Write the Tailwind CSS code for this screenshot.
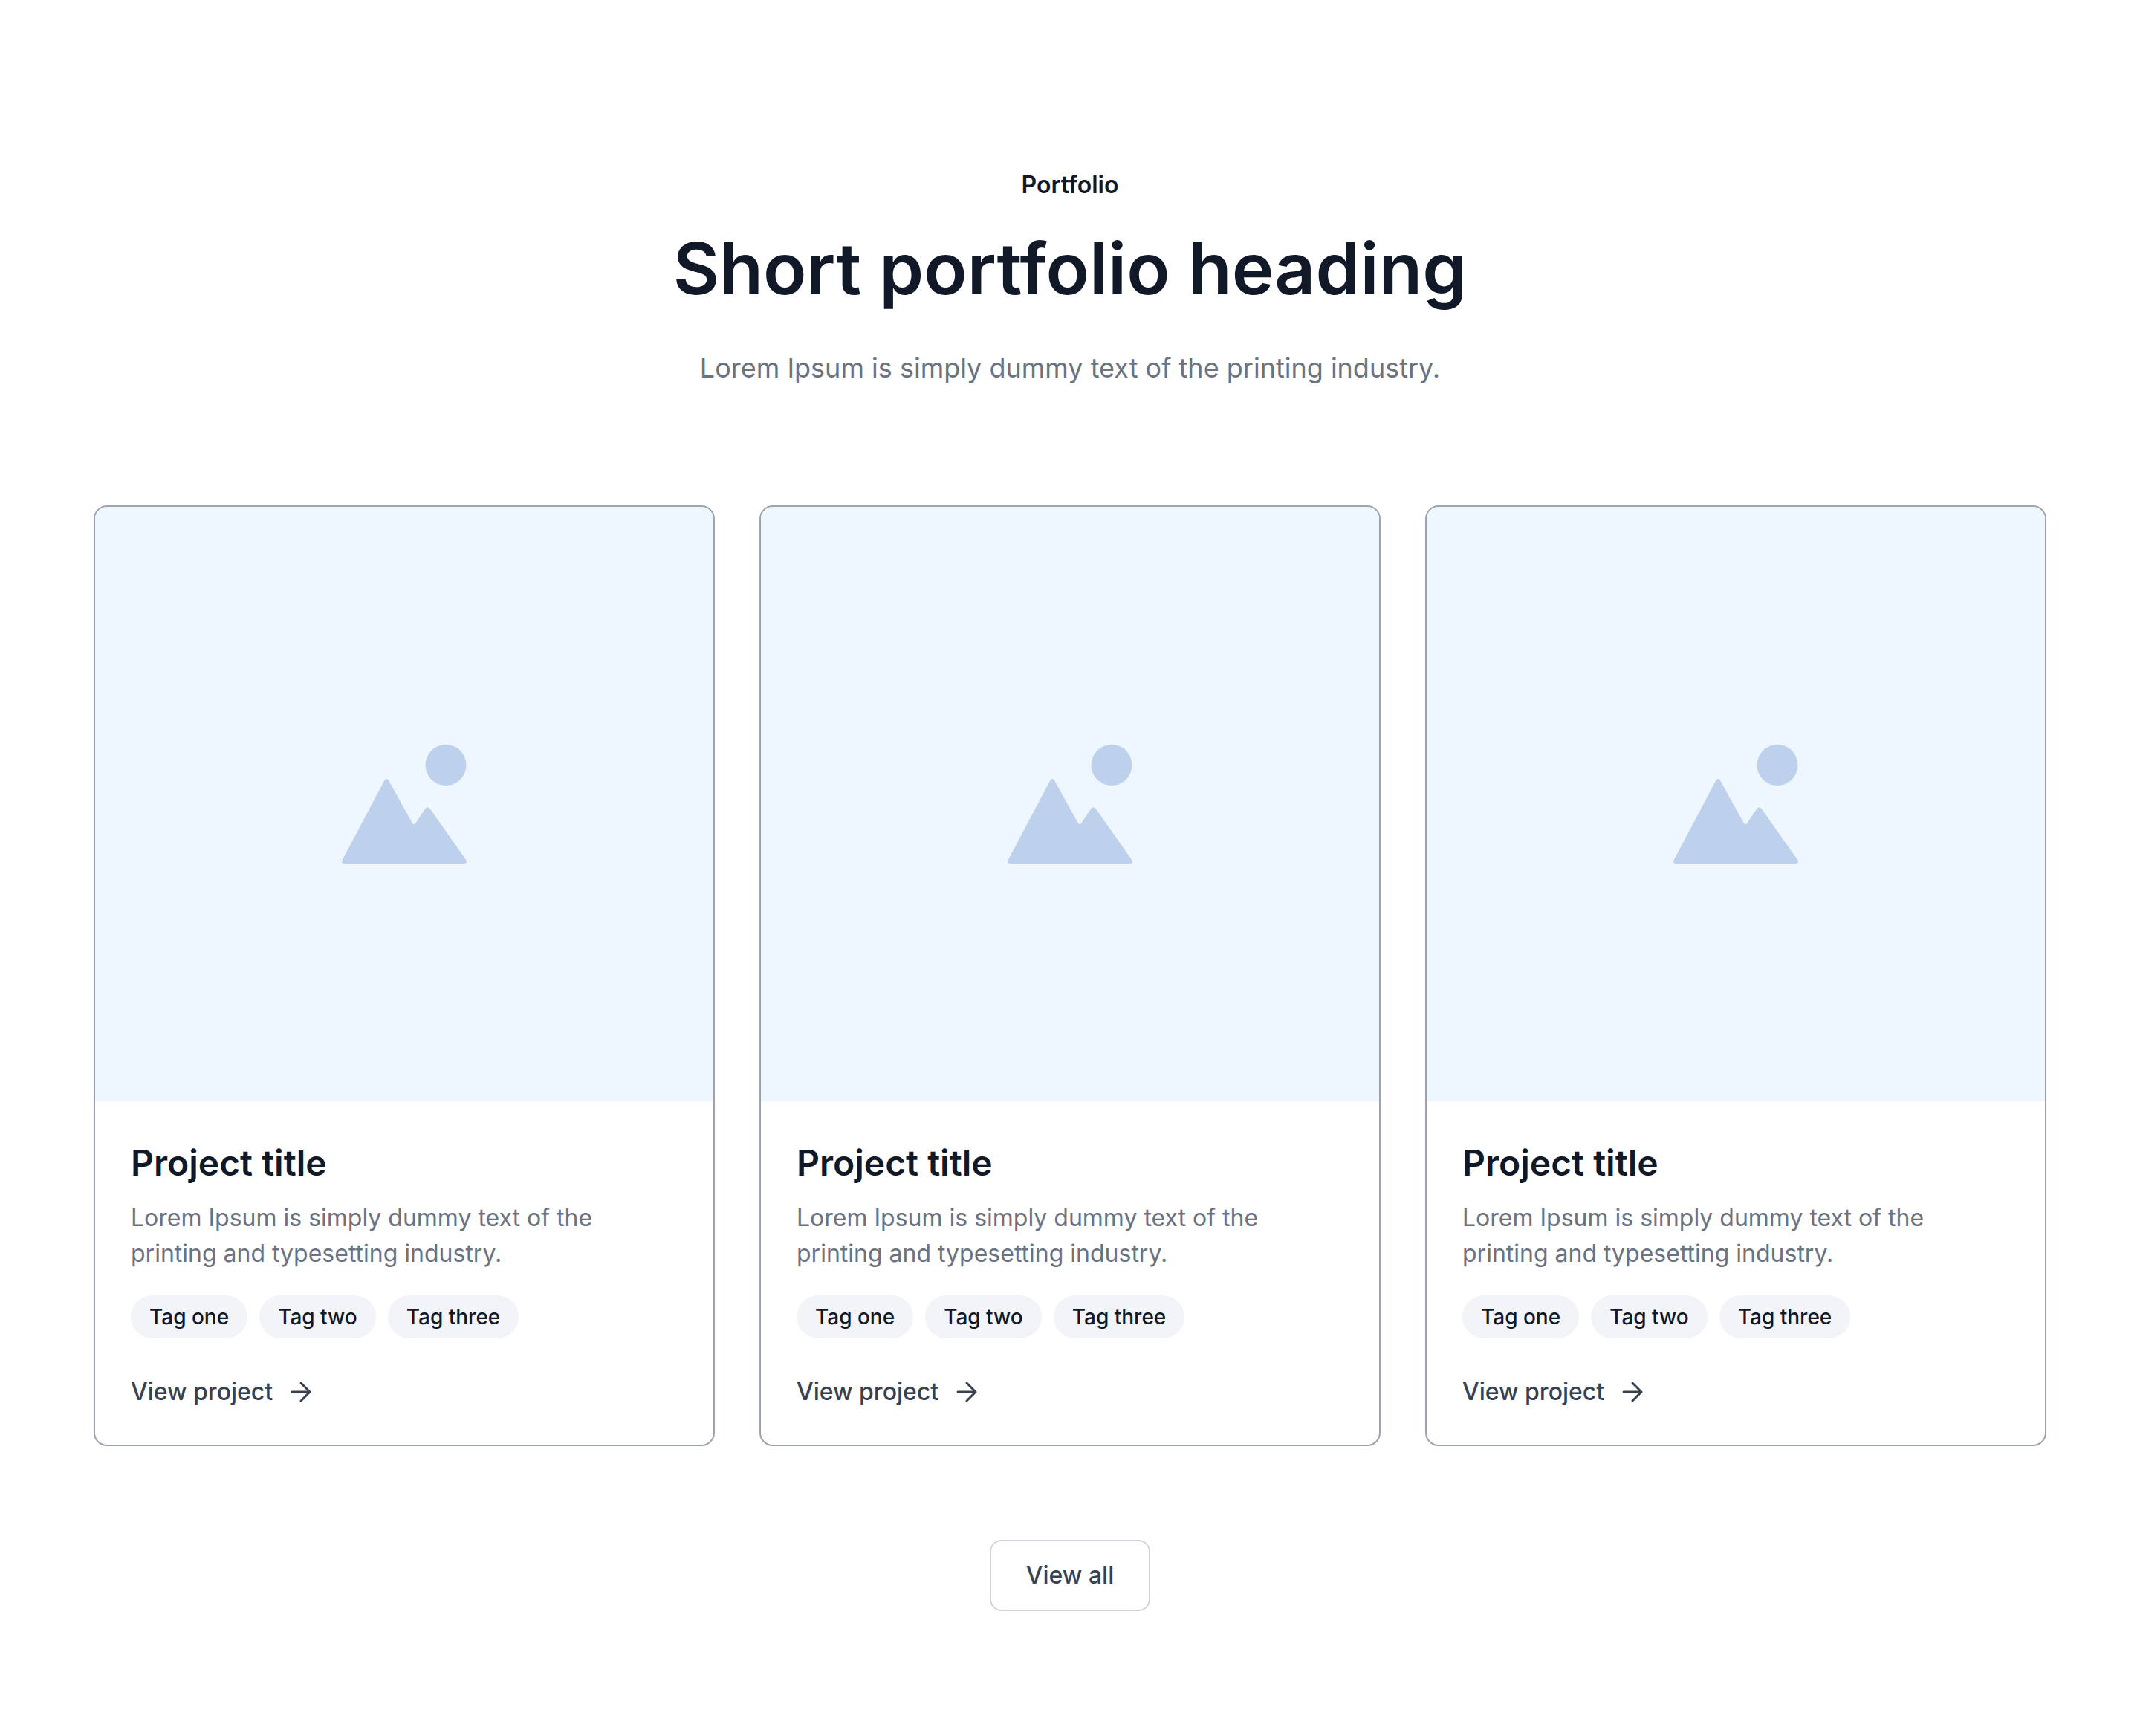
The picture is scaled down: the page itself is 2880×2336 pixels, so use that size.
<!DOCTYPE html>
<html lang="en">
<head>
    <meta charset="UTF-8">
    <meta name="viewport" content="width=device-width, initial-scale=1.0">
    <title>Portfolio</title>
    <script src="https://cdn.jsdelivr.net/npm/@tailwindcss/browser@4"></script>
</head>
<body class="bg-white font-['Inter',sans-serif] text-[#111827]">

    <!-- Shared icons -->
    <svg class="hidden">
        <symbol id="icon-image" viewBox="0 0 168 160">
            <circle cx="140" cy="27.5" r="27.5" fill="currentColor"/>
            <path d="M57.4 48 Q60 44 63 48 L94.500 105 Q96.800 109 99 106 L112.500 86 Q115.500 82.500 118.500 86 L167.500 155.500 Q169 160 165 160 H3 Q-1 160 0.500 155.500 Z" fill="currentColor"/>
        </symbol>
        <symbol id="icon-arrow" viewBox="0 0 40 40">
            <path d="M6 20 H30 M18 8 L30 20 L18 32" fill="none" stroke="currentColor" stroke-width="3" stroke-linecap="round" stroke-linejoin="round"/>
        </symbol>
    </svg>

    <section class="flex flex-col items-center px-[126px] pt-[225px] pb-[168px]">
        <header class="text-center">
            <p class="text-[32px] leading-12 font-semibold">Portfolio</p>
            <h1 class="mt-7 text-8xl leading-[120px] font-semibold">Short portfolio heading</h1>
            <p class="mt-[46px] text-4xl leading-14 text-[#6b7280]">Lorem Ipsum is simply dummy text of the printing industry.</p>
        </header>

        <div class="mt-[157px] grid w-full grid-cols-3 gap-15">
            <article class="overflow-hidden rounded-[18px] border-2 border-[#9ca3af]">
                <div class="flex h-[800px] items-center justify-center bg-[#eef6ff] text-[#bdd1ec]">
                    <svg class="h-40 w-42"><use href="#icon-image"/></svg>
                </div>
                <div class="px-12 pt-[49px] pb-[47px]">
                    <h2 class="text-5xl leading-17 font-semibold">Project title</h2>
                    <p class="mt-4 max-w-[680px] text-[32px] leading-12 text-[#6b7280]">Lorem Ipsum is simply dummy text of the printing and typesetting industry.</p>
                    <ul class="mt-8 flex gap-4 text-[28px] leading-[42px] font-medium">
                        <li class="rounded-full bg-[#f3f4f8] px-[25px] py-2">Tag one</li>
                        <li class="rounded-full bg-[#f3f4f8] px-[25px] py-2">Tag two</li>
                        <li class="rounded-full bg-[#f3f4f8] px-[25px] py-2">Tag three</li>
                    </ul>
                    <a href="#" class="mt-12 flex w-fit items-center gap-5 text-[32px] leading-12 font-medium text-[#374151]">
                        View project
                        <svg class="size-10"><use href="#icon-arrow"/></svg>
                    </a>
                </div>
            </article>

            <article class="overflow-hidden rounded-[18px] border-2 border-[#9ca3af]">
                <div class="flex h-[800px] items-center justify-center bg-[#eef6ff] text-[#bdd1ec]">
                    <svg class="h-40 w-42"><use href="#icon-image"/></svg>
                </div>
                <div class="px-12 pt-[49px] pb-[47px]">
                    <h2 class="text-5xl leading-17 font-semibold">Project title</h2>
                    <p class="mt-4 max-w-[680px] text-[32px] leading-12 text-[#6b7280]">Lorem Ipsum is simply dummy text of the printing and typesetting industry.</p>
                    <ul class="mt-8 flex gap-4 text-[28px] leading-[42px] font-medium">
                        <li class="rounded-full bg-[#f3f4f8] px-[25px] py-2">Tag one</li>
                        <li class="rounded-full bg-[#f3f4f8] px-[25px] py-2">Tag two</li>
                        <li class="rounded-full bg-[#f3f4f8] px-[25px] py-2">Tag three</li>
                    </ul>
                    <a href="#" class="mt-12 flex w-fit items-center gap-5 text-[32px] leading-12 font-medium text-[#374151]">
                        View project
                        <svg class="size-10"><use href="#icon-arrow"/></svg>
                    </a>
                </div>
            </article>

            <article class="overflow-hidden rounded-[18px] border-2 border-[#9ca3af]">
                <div class="flex h-[800px] items-center justify-center bg-[#eef6ff] text-[#bdd1ec]">
                    <svg class="h-40 w-42"><use href="#icon-image"/></svg>
                </div>
                <div class="px-12 pt-[49px] pb-[47px]">
                    <h2 class="text-5xl leading-17 font-semibold">Project title</h2>
                    <p class="mt-4 max-w-[680px] text-[32px] leading-12 text-[#6b7280]">Lorem Ipsum is simply dummy text of the printing and typesetting industry.</p>
                    <ul class="mt-8 flex gap-4 text-[28px] leading-[42px] font-medium">
                        <li class="rounded-full bg-[#f3f4f8] px-[25px] py-2">Tag one</li>
                        <li class="rounded-full bg-[#f3f4f8] px-[25px] py-2">Tag two</li>
                        <li class="rounded-full bg-[#f3f4f8] px-[25px] py-2">Tag three</li>
                    </ul>
                    <a href="#" class="mt-12 flex w-fit items-center gap-5 text-[32px] leading-12 font-medium text-[#374151]">
                        View project
                        <svg class="size-10"><use href="#icon-arrow"/></svg>
                    </a>
                </div>
            </article>
        </div>

        <button type="button" class="mt-[126px] rounded-2xl border-2 border-[#d1d5db] px-[47px] py-[22px] text-[32px] leading-12 font-medium text-[#374151]">View all</button>
    </section>

</body>
</html>
